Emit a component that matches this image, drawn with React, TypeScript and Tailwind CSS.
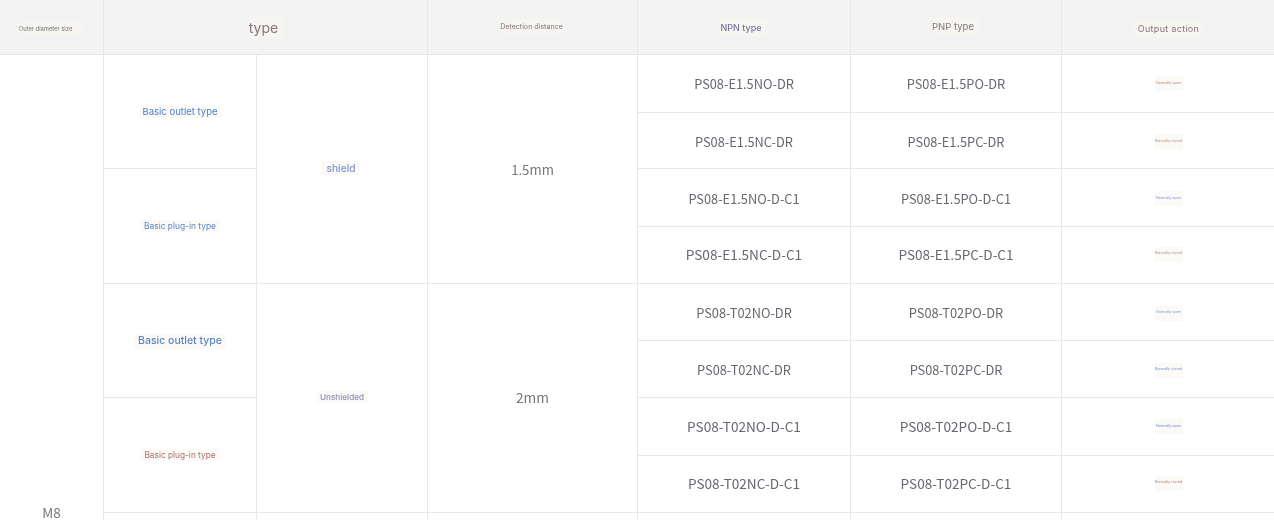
const small = 'text-[12.8px]';
const large = 'text-[13.6px]';

const models = [
  { npn: 'PS08-E1.5NO-DR', pnp: 'PS08-E1.5PO-DR', action: 'Normally open', color: 'text-[#b98a6f]', size: small, nudge: '' },
  { npn: 'PS08-E1.5NC-DR', pnp: 'PS08-E1.5PC-DR', action: 'Normally closed', color: 'text-[#b98a6f]', size: small, nudge: 'pt-0.5' },
  { npn: 'PS08-E1.5NO-D-C1', pnp: 'PS08-E1.5PO-D-C1', action: 'Normally open', color: 'text-[#7f92cc]', size: small, nudge: 'pt-0.5' },
  { npn: 'PS08-E1.5NC-D-C1', pnp: 'PS08-E1.5PC-D-C1', action: 'Normally closed', color: 'text-[#b08a85]', size: large, nudge: 'pb-0.5' },
  { npn: 'PS08-T02NO-DR', pnp: 'PS08-T02PO-DR', action: 'Normally open', color: 'text-[#7a9cc8]', size: small, nudge: 'pt-0.5' },
  { npn: 'PS08-T02NC-DR', pnp: 'PS08-T02PC-DR', action: 'Normally closed', color: 'text-[#6f93d4]', size: small, nudge: 'pt-0.5' },
  { npn: 'PS08-T02NO-D-C1', pnp: 'PS08-T02PO-D-C1', action: 'Normally open', color: 'text-[#6f86cc]', size: large, nudge: '' },
  { npn: 'PS08-T02NC-D-C1', pnp: 'PS08-T02PC-D-C1', action: 'Normally closed', color: 'text-[#b57f7c]', size: large, nudge: 'pb-0.5' },
];

const cell = 'flex items-center justify-center border-r border-b border-[#e8e8e8] text-center';
const head = 'flex items-center justify-center border-r border-b border-[#e6e6e6] bg-[#f3f3f3] text-center';
const cjk = "[font-family:'Noto_Sans_CJK_SC','Noto_Sans',sans-serif]";
const inter = "[font-family:Inter,'Noto_Sans',sans-serif]";

function HeadMark({ className, children }: { className: string; children: string }) {
  return <span className={`bg-[#f6f5f1] py-1 leading-none whitespace-nowrap ${inter} ${className}`}>{children}</span>;
}

function Mark({ className, children }: { className: string; children: string }) {
  return <span className={`bg-[#fbfaf7] px-1 py-0.5 leading-none whitespace-nowrap ${inter} ${className}`}>{children}</span>;
}

export default function App() {
  return (
    <div className="h-[520px] w-[1274px] overflow-hidden bg-white">
      <div className="grid grid-cols-[104px_153px_171px_210px_213px_211px_213px] grid-rows-[55px_58px_56px_58px_57px_57px_57px_58px_57px] auto-rows-[57px] blur-[0.3px]">
        {/* Header */}
        <div className={`${head} pt-1`}>
          <HeadMark className="pr-[12px] text-[5.8px] text-[#77777a]">Outer diameter size</HeadMark>
        </div>
        <div className={`${head} col-span-2 pt-0.5`}>
          <HeadMark className="pr-1 text-[14px] text-[#85787a]">type</HeadMark>
        </div>
        <div className={head}>
          <HeadMark className="pr-0.5 text-[7.1px] text-[#84787c]">Detection distance</HeadMark>
        </div>
        <div className={head}>
          <HeadMark className="pr-1.5 text-[9px] font-medium text-[#77769c]">NPN type</HeadMark>
        </div>
        <div className={head}>
          <HeadMark className="pr-1.5 text-[9.5px] text-[#85777c]">PNP type</HeadMark>
        </div>
        <div className={`${head} border-r-0 pt-0.5`}>
          <HeadMark className="px-1 text-[9px] tracking-[0.3px] text-[#8c7379]">Output action</HeadMark>
        </div>

        {/* Diameter */}
        <div className={`${cell} row-span-16 pt-0.5`}>
          <span className={`${cjk} text-[13.5px] leading-none text-[#777777]`}>M8</span>
        </div>

        {/* Shielded group */}
        <div className={`${cell} row-span-2`}>
          <Mark className="text-[9.5px] text-[#4d80c9]">Basic outlet type</Mark>
        </div>
        <div className={`${cell} row-span-4 pr-0.5 pb-0.5`}>
          <Mark className="text-[10.2px] font-medium text-[#7f96c8]">shield</Mark>
        </div>
        <div className={`${cell} row-span-4 pt-0.5`}>
          <span className={`${cjk} text-[13.2px] text-[#777777]`}>1.5mm</span>
        </div>
        <ModelCells model={models[0]} />

        <ModelCells model={models[1]} />

        <div className={`${cell} row-span-2`}>
          <Mark className="text-[8.4px] text-[#5f86c4]">Basic plug-in type</Mark>
        </div>
        <ModelCells model={models[2]} />

        <ModelCells model={models[3]} />

        {/* Unshielded group */}
        <div className={`${cell} row-span-2 pt-0.5`}>
          <Mark className="text-[10.5px] font-medium text-[#5d86c0]">Basic outlet type</Mark>
        </div>
        <div className={`${cell} row-span-4 pb-0.5`}>
          <Mark className="text-[8.2px] font-medium text-[#8f8fb5]">Unshielded</Mark>
        </div>
        <div className={`${cell} row-span-4 pb-0.5`}>
          <span className={`${cjk} text-[13.7px] text-[#777777]`}>2mm</span>
        </div>
        <ModelCells model={models[4]} />

        <ModelCells model={models[5]} />

        <div className={`${cell} row-span-2`}>
          <Mark className="text-[8.3px] text-[#ac7068]">Basic plug-in type</Mark>
        </div>
        <ModelCells model={models[6]} />

        <ModelCells model={models[7]} />

        {/* Next row, cut off by the window */}
        <div className={cell} />
        <div className={cell} />
        <div className={cell} />
        <div className={cell} />
        <div className={cell} />
        <div className={`${cell} border-r-0`} />
      </div>
    </div>
  );
}

function ModelCells({ model }: { model: (typeof models)[number] }) {
  return (
    <>
      <div className={`${cell} ${model.nudge}`}>
        <span className={`${cjk} ${model.size} text-[#65686e]`}>{model.npn}</span>
      </div>
      <div className={`${cell} ${model.nudge}`}>
        <span className={`${cjk} ${model.size} text-[#65686e]`}>{model.pnp}</span>
      </div>
      <div className={`${cell} border-r-0 ${model.nudge}`}>
        <span className={`flex h-[15px] w-[28px] items-center justify-center bg-[#fbfaf7] leading-none whitespace-nowrap ${inter} text-[3.6px] ${model.color}`}>
          {model.action}
        </span>
      </div>
    </>
  );
}
